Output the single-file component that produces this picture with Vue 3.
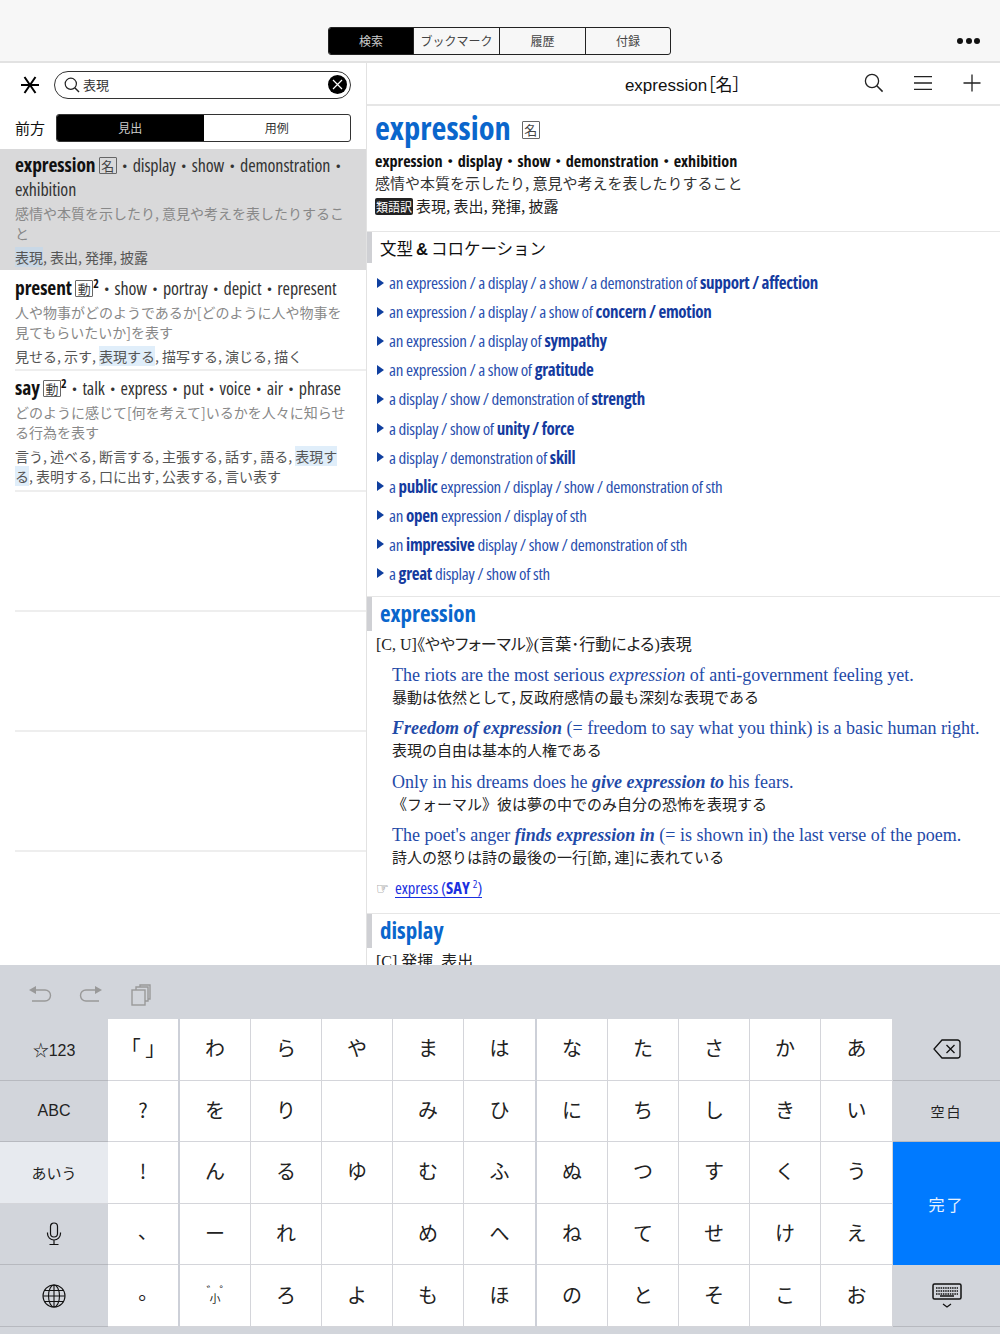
<template>
  <div class="page">
    <header class="topbar">
      <div class="tabs">
        <button v-for="(t, i) in tabs" :key="t" class="tab" :class="{ on: i === 0 }">{{ t }}</button>
      </div>
      <div class="more"><i></i><i></i><i></i></div>
    </header>

    <div class="main">
      <aside class="left">
        <div class="search-row">
          <svg class="aster" width="20" height="20" viewBox="0 0 20 20">
            <path d="M1 10H19M4.500 2L15.500 18M15.500 2L4.500 18" fill="none" stroke="#000" stroke-width="2" />
          </svg>
          <div class="search">
            <svg width="16" height="16" viewBox="0 0 16 16">
              <circle cx="6.800" cy="6.800" r="5.600" fill="none" stroke="#222" stroke-width="1.200" />
              <path d="M11 11l4 4" stroke="#222" stroke-width="1.400" />
            </svg>
            <span class="q">表現</span>
            <span class="clear">
              <svg width="11" height="11" viewBox="0 0 11 11"><path d="M1 1l9 9M10 1l-9 9" stroke="#fff" stroke-width="1.200" /></svg>
            </span>
          </div>
        </div>
        <div class="filter-row">
          <span class="label">前方</span>
          <div class="seg">
            <span class="on">見出</span>
            <span>用例</span>
          </div>
        </div>

        <div class="result selected">
          <div class="head"><b>expression</b> <em class="pos">名</em><span class="dot">・</span>display<span class="dot">・</span>show<span class="dot">・</span>demonstration<span class="dot">・</span><br />exhibition</div>
          <p class="def">感情や本質を示したり, 意見や考えを表したりすること</p>
          <p class="tr"><mark>表現</mark>, 表出, 発揮, 披露</p>
        </div>
        <div class="result">
          <div class="head"><b>present</b> <em class="pos">動</em><sup>2</sup><span class="dot">・</span>show<span class="dot">・</span>portray<span class="dot">・</span>depict<span class="dot">・</span>represent</div>
          <p class="def">人や物事がどのようであるか[どのように人や物事を見てもらいたいか]を表す</p>
          <p class="tr">見せる, 示す, <mark>表現する</mark>, 描写する, 演じる, 描く</p>
        </div>
        <div class="result last">
          <div class="head"><b>say</b> <em class="pos">動</em><sup>2</sup><span class="dot">・</span>talk<span class="dot">・</span>express<span class="dot">・</span>put<span class="dot">・</span>voice<span class="dot">・</span>air<span class="dot">・</span>phrase</div>
          <p class="def">どのように感じて[何を考えて]いるかを人々に知らせる行為を表す</p>
          <p class="tr">言う, 述べる, 断言する, 主張する, 話す, 語る, <mark>表現する</mark>, 表明する, 口に出す, 公表する, 言い表す</p>
        </div>
        <div v-for="n in 3" :key="n" class="empty"></div>
      </aside>

      <section class="right">
        <div class="r-head">
          <span class="r-title">expression［名］</span>
          <div class="r-icons">
            <svg width="20" height="20" viewBox="0 0 20 20">
              <circle cx="8" cy="8" r="6.600" fill="none" stroke="#222" stroke-width="1.300" />
              <path d="M12.800 12.800l5.800 5.800" stroke="#222" stroke-width="1.500" />
            </svg>
            <svg width="20" height="20" viewBox="0 0 20 20">
              <path d="M1 3.700h18M1 10h18M1 16.300h18" stroke="#222" stroke-width="1.300" />
            </svg>
            <svg width="20" height="20" viewBox="0 0 20 20">
              <path d="M1.500 10h17M10 1.500v17" stroke="#222" stroke-width="1.300" />
            </svg>
          </div>
        </div>

        <div class="entry">
          <h1><span>expression</span><em class="pos title-pos">名</em></h1>
          <div class="syn">expression<span class="dot">・</span>display<span class="dot">・</span>show<span class="dot">・</span>demonstration<span class="dot">・</span>exhibition</div>
          <p class="e-def">感情や本質を示したり, 意見や考えを表したりすること</p>
          <p class="e-tr"><span class="tag">類語訳</span>表現, 表出, 発揮, 披露</p>
        </div>

        <div class="sec">
          <h2 class="plain">文型<b>&amp;</b>コロケーション</h2>
          <ul class="coll">
            <li v-for="(c, i) in collocations" :key="i">
              <span class="tri"></span>
              <span><template v-for="(p, j) in c" :key="j"><b v-if="j % 2">{{ p }}</b><template v-else>{{ p }}</template></template></span>
            </li>
          </ul>
        </div>

        <div class="sec">
          <h2>expression</h2>
          <p class="sense">[C, U]《ややフォーマル》(言葉･行動による)表現</p>
          <div class="ex">
            <p class="en">The riots are the most serious <i>expression</i> of anti-government feeling yet.</p>
            <p class="ja">暴動は依然として, 反政府感情の最も深刻な表現である</p>
          </div>
          <div class="ex">
            <p class="en"><b><i>Freedom of expression</i></b> (= freedom to say what you think) is a basic human right.</p>
            <p class="ja">表現の自由は基本的人権である</p>
          </div>
          <div class="ex">
            <p class="en">Only in his dreams does he <b><i>give expression to</i></b> his fears.</p>
            <p class="ja">《フォーマル》彼は夢の中でのみ自分の恐怖を表現する</p>
          </div>
          <div class="ex">
            <p class="en">The poet's anger <b><i>finds expression in</i></b> (= is shown in) the last verse of the poem.</p>
            <p class="ja">詩人の怒りは詩の最後の一行[節, 連]に表れている</p>
          </div>
          <p class="xref"><span class="hand">☞</span><a>express (<b>SAY</b> <sup>2</sup>)</a></p>
        </div>

        <div class="sec">
          <h2>display</h2>
          <p class="sense">[C] 発揮, 表出</p>
        </div>
      </section>
    </div>

    <footer class="kb">
      <div class="kb-tools">
        <svg width="24" height="22" viewBox="0 0 24 22" fill="none" stroke="#999" stroke-width="1.400">
          <path d="M4 6h13a5.500 5.500 0 0 1 0 11H4" />
          <path d="M1 6l7-4v8z" fill="#999" stroke="none" />
        </svg>
        <svg width="24" height="22" viewBox="0 0 24 22" fill="none" stroke="#999" stroke-width="1.400">
          <path d="M20 6H7a5.500 5.500 0 0 0 0 11h13" />
          <path d="M23 6l-7-4v8z" fill="#999" stroke="none" />
        </svg>
        <svg width="22" height="24" viewBox="0 0 22 24" fill="none" stroke="#999" stroke-width="1.400">
          <rect x="2" y="7" width="13" height="15" />
          <path d="M6 7V4h12v14h-3M10 4V2h10v14h-2" />
        </svg>
      </div>
      <div class="keys">
        <template v-for="(row, r) in rows" :key="r">
          <div
            v-for="(k, c) in row"
            :key="c"
            class="key"
            :class="[keyClass(r, c), { kana: c > 0 && c < 12 }]"
          >
            <svg v-if="k === 'mic'" width="16" height="24" viewBox="0 0 16 24" fill="none" stroke="#111" stroke-width="1.200">
              <rect x="4.500" y="1" width="7" height="14" rx="3.500" />
              <path d="M1.500 10.500v1a6.500 6.500 0 0 0 13 0v-1M8 18v4M3.500 22.500h9" />
            </svg>
            <svg v-else-if="k === 'globe'" width="24" height="24" viewBox="0 0 24 24" fill="none" stroke="#111" stroke-width="1.100">
              <circle cx="12" cy="12" r="11" />
              <ellipse cx="12" cy="12" rx="5.500" ry="11" />
              <path d="M12 1v22M1 12h22M2.500 6.500h19M2.500 17.500h19" />
            </svg>
            <svg v-else-if="k === 'back'" width="28" height="20" viewBox="0 0 28 20" fill="none" stroke="#111" stroke-width="1.300">
              <path d="M9 1h15.500a2.500 2.500 0 0 1 2.500 2.500v13a2.500 2.500 0 0 1-2.500 2.500H9L1 10z" />
              <path d="M13.500 6l8 8M21.500 6l-8 8" />
            </svg>
            <svg v-else-if="k === 'hide'" width="30" height="26" viewBox="0 0 30 26" fill="none" stroke="#111">
              <rect x="1" y="1" width="28" height="15" rx="1.500" stroke-width="1.500" />
              <path d="M4 5h22M4 8h22M4 11h22" stroke-width="1.500" stroke-dasharray="1.500 0.800" />
              <path d="M8 13h14" stroke-width="1.500" />
              <path d="M11 21l4 3 4-3" stroke-width="1.200" />
            </svg>
            <span v-else-if="k === 'small'" class="small-key"><i class="dk">゛</i>小<i class="hd">゜</i></span>
            <template v-else>{{ k }}</template>
          </div>
        </template>
      </div>
    </footer>
  </div>
</template>

<script setup>
const tabs = ['検索', 'ブックマーク', '履歴', '付録']

// odd positions are the bold words
const collocations = [
  ['an expression / a display / a show / a demonstration of ', 'support / affection'],
  ['an expression / a display / a show of ', 'concern / emotion'],
  ['an expression / a display of ', 'sympathy'],
  ['an expression / a show of ', 'gratitude'],
  ['a display / show / demonstration of ', 'strength'],
  ['a display / show of ', 'unity / force'],
  ['a display / demonstration of ', 'skill'],
  ['a ', 'public', ' expression / display / show / demonstration of sth'],
  ['an ', 'open', ' expression / display of sth'],
  ['an ', 'impressive', ' display / show / demonstration of sth'],
  ['a ', 'great', ' display / show of sth']
]

const rows = [
  ['☆123', '「 」', 'わ', 'ら', 'や', 'ま', 'は', 'な', 'た', 'さ', 'か', 'あ', 'back'],
  ['ABC', '?', 'を', 'り', '', 'み', 'ひ', 'に', 'ち', 'し', 'き', 'い', '空白'],
  ['あいう', '!', 'ん', 'る', 'ゆ', 'む', 'ふ', 'ぬ', 'つ', 'す', 'く', 'う', '完了'],
  ['mic', '、', 'ー', 'れ', '', 'め', 'へ', 'ね', 'て', 'せ', 'け', 'え'],
  ['globe', '。', 'small', 'ろ', 'よ', 'も', 'ほ', 'の', 'と', 'そ', 'こ', 'お', 'hide']
]

const keyClass = (r, c) => {
  if (c === 0) return r === 2 ? 'fn active' : 'fn'
  if (c === 12) return r === 2 ? 'done' : 'fn right-fn'
  if (c === 1) return r > 2 ? 'gap-r punct' : 'gap-r'
  if (c === 6) return 'gap-r'
  return ''
}
</script>

<style>
html, body { background: #fff; }
</style>

<style scoped>
.page {
  width: 1000px;
  height: 1334px;
  overflow: hidden;
  display: flex;
  flex-direction: column;
  font-family: "Noto Sans CJK JP", "Liberation Sans", sans-serif;
  color: #111;
}
p, h1, h2, ul { margin: 0; padding: 0; }

.topbar {
  flex: none;
  background: #f7f7f7;
  border-bottom: 2px solid #e2e2e2;
  display: flex;
  justify-content: center;
  padding: 27px 0 6px;
  height: 28px;
  position: relative;
}
.tabs {
  display: flex;
  height: 26px;
  border: 1px solid #222;
  border-radius: 3px;
  overflow: hidden;
  margin-left: -1px;
}
.tab {
  width: 86px;
  padding: 0;
  border: 0;
  border-left: 1px solid #222;
  background: none;
  font: 12px/26px "Noto Sans CJK JP", sans-serif;
  color: #444;
}
.tab:first-child { border-left: 0; width: 84px; }
.tab:last-child { width: 85px; }
.tab.on { background: #000; color: #ccc; }
.more {
  position: absolute;
  right: 20px;
  top: 38px;
  display: flex;
  gap: 2.500px;
}
.more i {
  width: 6px;
  height: 6px;
  border-radius: 50%;
  background: #111;
}

.main {
  flex: none;
  height: 902px;
  display: flex;
  overflow: hidden;
}
.left {
  width: 366px;
  flex: none;
  border-right: 1px solid #e2e2e2;
}
.search-row {
  height: 43px;
  display: flex;
  align-items: center;
  padding: 0 15px 0 20px;
  gap: 14px;
}
.aster { flex: none; }
.search {
  flex: 1;
  height: 26px;
  border: 1px solid #333;
  border-radius: 14px;
  display: flex;
  align-items: center;
  padding: 0 3px 0 9px;
  gap: 3px;
}
.q { flex: 1; font-size: 13px; color: #333; line-height: 1; }
.clear {
  width: 19px;
  height: 19px;
  border-radius: 50%;
  background: #000;
  display: flex;
  align-items: center;
  justify-content: center;
}
.filter-row {
  height: 43px;
  display: flex;
  align-items: center;
  padding: 0 15px;
  gap: 11px;
}
.label { font-size: 15px; line-height: 1; }
.seg {
  flex: 1;
  height: 26px;
  display: flex;
  border: 1px solid #333;
  border-radius: 3px;
  overflow: hidden;
  font-size: 12px;
  line-height: 26px;
  text-align: center;
  color: #333;
}
.seg span { flex: 1; }
.seg .on { background: #000; color: #ccc; }

.result {
  margin-left: 15px;
  padding: 5px 15px 3px 0;
  border-bottom: 2px solid #eee;
}
.result.last { padding-bottom: 4px; }
.result.selected {
  margin: 0 0 1px;
  background: #d9d9da;
  border-bottom: 0;
  padding: 4px 15px 3px;
}
.head {
  font-family: "Open Sans", "Noto Sans CJK JP", sans-serif;
  font-stretch: 75%;
  font-size: 18px;
  letter-spacing: -0.1px;
  line-height: 24px;
  color: #333;
  white-space: nowrap;
}
.head b { font-size: 19.500px; color: #111; line-height: 0; }
.head sup { font-size: 12px; font-weight: 700; line-height: 0; color: #111; }
.dot { font-family: "Noto Sans CJK JP", sans-serif; font-size: 16px; font-stretch: normal; line-height: 0; }
.pos {
  display: inline-block;
  width: 18px;
  height: 17px;
  border: 1px solid #666;
  border-radius: 1px;
  font: normal 13px/15px "Noto Sans CJK JP", sans-serif;
  letter-spacing: 0;
  text-align: center;
  box-sizing: border-box;
  vertical-align: 1px;
  color: #444;
}
.def {
  font-size: 14px;
  line-height: 20px;
  margin-top: 2px;
  color: #888;
}
.tr {
  font-size: 14px;
  line-height: 20px;
  margin-top: 4px;
  color: #555;
}
mark { background: #e0eefa; color: inherit; }
.selected mark { background: #c9d8e6; }
.empty {
  height: 118px;
  margin-left: 15px;
  border-bottom: 2px solid #eee;
}

.right { flex: 1; min-width: 0; overflow: hidden; }
.r-head {
  height: 41px;
  border-bottom: 2px solid #e6e6e6;
  position: relative;
  display: flex;
  align-items: center;
  justify-content: center;
}
.r-title {
  font-family: "Liberation Sans", "Noto Sans CJK JP", sans-serif;
  font-size: 17px;
  font-feature-settings: "palt";
  margin-left: -1px;
}
.r-icons {
  position: absolute;
  right: 18px;
  top: 10px;
  display: flex;
  gap: 29px;
}

.entry {
  padding: 2px 8px 13px;
  border-bottom: 1px solid #e6e6e6;
}
h1 {
  font: 700 32.500px/40px "Open Sans", sans-serif;
  font-stretch: 75%;
  color: #0a66cc;
  display: flex;
  align-items: center;
  gap: 11px;
}
.title-pos { margin-top: 4px; height: 18px; }
.syn {
  font: 700 16.200px/22px "Open Sans", sans-serif;
  font-stretch: 75%;
  margin-top: 2px;
}
.syn .dot { font-size: 15px; }
.e-def { font-size: 15px; line-height: 22px; color: #333; }
.e-tr { font-size: 15px; line-height: 24px; color: #222; }
.tag {
  background: #222;
  color: #fff;
  font-size: 12px;
  line-height: 0;
  border-radius: 2px;
  padding: 0 1px;
  margin-right: 3px;
}

.sec { border-bottom: 1px solid #e6e6e6; }
.sec:last-child { border: 0; }
h2 {
  font: 700 23px/32px "Open Sans", sans-serif;
  font-stretch: 75%;
  color: #0a66cc;
  border-left: 5px solid #cfd0d4;
  padding: 0 0 2px 8px;
}
h2.plain {
  font: 400 16.500px/30px "Noto Sans CJK JP", sans-serif;
  color: #111;
  padding: 1px 0 0 8px;
}
h2.plain b { font-family: "Liberation Sans", sans-serif; line-height: 0; margin: 0 3px; }
.coll { list-style: none; padding: 5px 0 8px 10px; }
.coll li {
  height: 29.100px;
  display: flex;
  align-items: center;
  gap: 5px;
  font: 17px/29px "Open Sans", sans-serif;
  font-stretch: 75%;
  letter-spacing: -0.270px;
  color: #2a4fae;
}
.coll b { color: #143a9e; }
.tri {
  width: 0;
  height: 0;
  border-left: 7px solid #0f3f9f;
  border-top: 5px solid transparent;
  border-bottom: 5px solid transparent;
}
.sense {
  font-size: 16px;
  font-family: "Liberation Serif", "Noto Sans CJK JP", serif;
  font-feature-settings: "palt";
  line-height: 24px;
  padding-left: 9px;
  margin-top: 2px;
  color: #222;
}
.ex { padding: 7.500px 0 3px 25px; }
.sense + .ex { padding-top: 6.500px; }
.en {
  font: 18px/22px "Liberation Serif", serif;
  color: #1f4aa8;
  white-space: nowrap;
}
.ja { font-size: 15px; line-height: 21px; color: #222; }
.xref {
  padding: 6px 0 13px 9px;
  font: 16.500px/24px "Open Sans", sans-serif;
  font-stretch: 75%;
}
.hand { color: #555; margin-right: 6px; font-family: "DejaVu Sans", sans-serif; font-size: 16px; line-height: 0; }
.xref a {
  display: inline-block;
  line-height: 18px;
  color: #1a30e0;
  border-bottom: 1px solid #1a30e0;
}
.xref sup { font-size: 11px; line-height: 0; }

.kb {
  flex: 1;
  background: #d2d5db;
}
.kb-tools {
  height: 49px;
  display: flex;
  align-items: center;
  gap: 27px;
  padding: 5px 0 0 28px;
}
.keys {
  display: grid;
  grid-template-columns: 108px 72px repeat(4, 71px) 73px repeat(4, 71px) 72px 1fr;
  grid-auto-rows: 61.600px;
}
.key {
  background: #fff;
  border-right: 1px solid #d4d5da;
  border-bottom: 1px solid #d4d5da;
  display: flex;
  align-items: center;
  justify-content: center;
  font-size: 20px;
  color: #222;
  box-sizing: border-box;
  white-space: nowrap;
}
.kana { font-family: "Noto Sans CJK JP", sans-serif; padding-bottom: 3px; }
.gap-r { border-right: 2px solid #cdd0d8; }
.punct { font-feature-settings: "palt"; padding-bottom: 8px; }
.fn {
  background: #d2d5db;
  border-right: 0;
  border-bottom: 1px solid #b7b9bf;
  font-size: 16px;
  font-family: "Liberation Sans", "Noto Sans CJK JP", sans-serif;
}
.fn.active { background: #e7eaef; border-bottom-color: #d4d5da; font-size: 15px; }
.right-fn { font-size: 14px; letter-spacing: 2px; }
.done {
  grid-row: span 2;
  background: #007aff;
  border: 0;
  color: #e8f2ff;
  font-size: 16px;
  letter-spacing: 2px;
}
.small-key { position: relative; font-size: 11px; line-height: 1; top: 4px; }
.small-key i { position: absolute; font-style: normal; font-size: 12px; top: -8px; }
.small-key .dk { left: -3px; }
.small-key .hd { left: 10px; }
</style>
